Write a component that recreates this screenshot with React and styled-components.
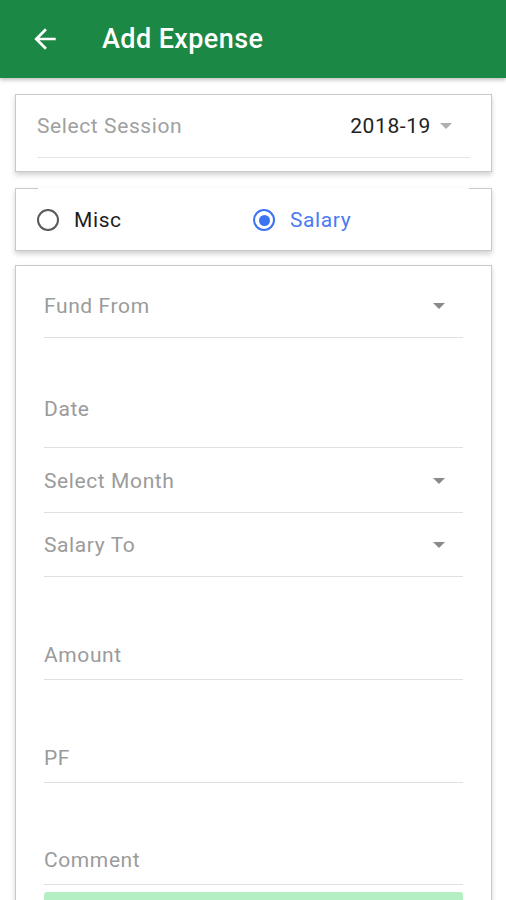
import React from "react";
import styled, { createGlobalStyle } from "styled-components";

const GlobalStyle = createGlobalStyle`
  html, body {
    margin: 0;
    padding: 0;
    background: #ffffff;
    font-family: Roboto, "Noto Sans", sans-serif;
  }
  #root {
    height: 900px;
    overflow: hidden;
  }
`;

const Page = styled.div`
  width: 506px;
  height: 900px;
  overflow: hidden;
  background: #fff;
`;

const Toolbar = styled.header`
  height: 78px;
  background: #1b8845;
  display: flex;
  align-items: center;
  padding-left: 29px;
  box-shadow: 0 2px 4px rgba(0, 0, 0, 0.25);
  position: relative;
  z-index: 2;
`;

const BackButton = styled.button`
  border: 0;
  background: none;
  padding: 0;
  width: 32px;
  height: 32px;
  display: flex;
  align-items: center;
  justify-content: center;
  margin-right: 41px;
`;

const Title = styled.h1`
  margin: 0;
  color: #fff;
  font-size: 27px;
  font-weight: 500;
  letter-spacing: 0.4px;
`;

const Content = styled.main`
  padding: 16px 14px 0 15px;
  display: flex;
  flex-direction: column;
  gap: 15px;
`;

const Card = styled.section`
  border: 1px solid #c9c9c9;
  background: #fff;
  box-shadow: 0 3px 5px rgba(0, 0, 0, 0.18);
`;

const SessionCard = styled(Card)`
  height: 78px;
  box-sizing: border-box;
  padding: 0 21px;
  display: flex;
  flex-direction: column;
`;

const SessionRow = styled.div`
  display: flex;
  align-items: center;
  justify-content: space-between;
  height: 62px;
  border-bottom: 1.5px solid #e4e4e4;
`;

const SessionLabel = styled.span`
  font-size: 21px;
  letter-spacing: 0.6px;
  color: #a0a0a0;
`;

const SessionValue = styled.span`
  display: flex;
  align-items: center;
  gap: 9px;
  font-size: 21px;
  letter-spacing: 0.6px;
  color: #222;
  padding-right: 18px;
`;

const Caret = styled.span`
  display: block;
  width: 0;
  height: 0;
  border-left: 6.5px solid transparent;
  border-right: 6.5px solid transparent;
  border-top: 6.5px solid ${(p) => (p.$light ? "#b0b0b0" : "#8a8a8a")};
`;

const TypeCard = styled(Card)`
  height: 63px;
  margin-top: 1px;
  margin-bottom: -1px;
  box-sizing: border-box;
  border-top: 0;
  background:
    linear-gradient(#c9c9c9, #c9c9c9) left top / 22px 1px no-repeat,
    linear-gradient(#c9c9c9, #c9c9c9) right top / 22px 1px no-repeat,
    #fff;
  display: flex;
  align-items: center;
  padding: 2px 0 0 21px;
`;

const RadioOption = styled.label`
  display: flex;
  align-items: center;
  gap: 15px;
  width: 216px;
  font-size: 21px;
  letter-spacing: 0.6px;
  color: ${(p) => (p.$checked ? "#4a7cf0" : "#1e1e1e")};
`;

const RadioMark = styled.span`
  width: 22px;
  height: 22px;
  box-sizing: border-box;
  border-radius: 50%;
  border: 2.5px solid ${(p) => (p.$checked ? "#3d72f2" : "#5a5a5a")};
  display: flex;
  align-items: center;
  justify-content: center;
  &::after {
    content: "";
    width: 11px;
    height: 11px;
    border-radius: 50%;
    background: ${(p) => (p.$checked ? "#3d72f2" : "transparent")};
  }
`;

const FormCard = styled(Card)`
  padding: 0 28px 0 28px;
  height: 700px;
  box-sizing: border-box;
`;

const Field = styled.div`
  height: ${(p) => p.$height}px;
  display: flex;
  align-items: flex-end;
  border-bottom: 1.5px solid #e0e0e0;
  box-sizing: border-box;
  padding-bottom: ${(p) => p.$bottom}px;
  padding-right: 18px;
`;

const FieldLabel = styled.span`
  flex: 1;
  font-size: 21px;
  letter-spacing: 0.6px;
  line-height: 24px;
  color: #9b9b9b;
`;

const FieldCaret = styled.span`
  display: block;
  margin-bottom: 9px;
`;

const SubmitButton = styled.button`
  display: block;
  width: 100%;
  height: 40px;
  margin-top: 7px;
  border: 0;
  border-radius: 3px;
  background: #b3efc2;
`;

const fields = [
  { label: "Fund From", height: 72, bottom: 19, caret: true },
  { label: "Date", height: 110, bottom: 26 },
  { label: "Select Month", height: 65, bottom: 19, caret: true },
  { label: "Salary To", height: 64, bottom: 19, caret: true },
  { label: "Amount", height: 103, bottom: 12 },
  { label: "PF", height: 103, bottom: 12 },
  { label: "Comment", height: 102, bottom: 12 },
];

export default function App() {
  return (
    <Page>
      <GlobalStyle />
      <Toolbar>
        <BackButton aria-label="Back">
          <svg width="32" height="32" viewBox="0 0 24 24">
            <path
              d="M20 11H7.83l5.59-5.59L12 4l-8 8 8 8 1.41-1.41L7.83 13H20v-2z"
              fill="#fff"
            />
          </svg>
        </BackButton>
        <Title>Add Expense</Title>
      </Toolbar>
      <Content>
        <SessionCard>
          <SessionRow>
            <SessionLabel>Select Session</SessionLabel>
            <SessionValue>
              2018-19 <Caret $light />
            </SessionValue>
          </SessionRow>
        </SessionCard>
        <TypeCard>
          <RadioOption>
            <RadioMark />
            Misc
          </RadioOption>
          <RadioOption $checked>
            <RadioMark $checked />
            Salary
          </RadioOption>
        </TypeCard>
        <FormCard>
          {fields.map((f) => (
            <Field key={f.label} $height={f.height} $bottom={f.bottom}>
              <FieldLabel>{f.label}</FieldLabel>
              {f.caret && (
                <FieldCaret>
                  <Caret />
                </FieldCaret>
              )}
            </Field>
          ))}
          <SubmitButton />
        </FormCard>
      </Content>
    </Page>
  );
}
